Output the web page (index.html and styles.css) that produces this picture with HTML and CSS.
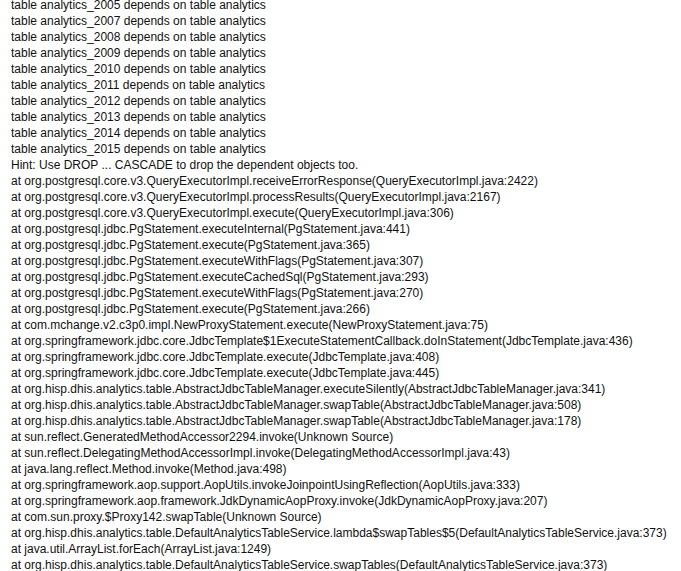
FILE: index.html
```html
<!DOCTYPE html>
<html lang="en">
<head>
    <meta charset="UTF-8">
    <meta name="viewport" content="width=device-width, initial-scale=1.0">
    <title>Error</title>
    <link rel="stylesheet" href="styles.css">
</head>
<body>
    <div class="error-log">
        <div class="log-line">table analytics_2005 depends on table analytics</div>
        <div class="log-line">table analytics_2007 depends on table analytics</div>
        <div class="log-line">table analytics_2008 depends on table analytics</div>
        <div class="log-line">table analytics_2009 depends on table analytics</div>
        <div class="log-line">table analytics_2010 depends on table analytics</div>
        <div class="log-line">table analytics_2011 depends on table analytics</div>
        <div class="log-line">table analytics_2012 depends on table analytics</div>
        <div class="log-line">table analytics_2013 depends on table analytics</div>
        <div class="log-line">table analytics_2014 depends on table analytics</div>
        <div class="log-line">table analytics_2015 depends on table analytics</div>
        <div class="log-line">Hint: Use DROP ... CASCADE to drop the dependent objects too.</div>
        <div class="log-line">at org.postgresql.core.v3.QueryExecutorImpl.receiveErrorResponse(QueryExecutorImpl.java:2422)</div>
        <div class="log-line">at org.postgresql.core.v3.QueryExecutorImpl.processResults(QueryExecutorImpl.java:2167)</div>
        <div class="log-line">at org.postgresql.core.v3.QueryExecutorImpl.execute(QueryExecutorImpl.java:306)</div>
        <div class="log-line">at org.postgresql.jdbc.PgStatement.executeInternal(PgStatement.java:441)</div>
        <div class="log-line">at org.postgresql.jdbc.PgStatement.execute(PgStatement.java:365)</div>
        <div class="log-line">at org.postgresql.jdbc.PgStatement.executeWithFlags(PgStatement.java:307)</div>
        <div class="log-line">at org.postgresql.jdbc.PgStatement.executeCachedSql(PgStatement.java:293)</div>
        <div class="log-line">at org.postgresql.jdbc.PgStatement.executeWithFlags(PgStatement.java:270)</div>
        <div class="log-line">at org.postgresql.jdbc.PgStatement.execute(PgStatement.java:266)</div>
        <div class="log-line">at com.mchange.v2.c3p0.impl.NewProxyStatement.execute(NewProxyStatement.java:75)</div>
        <div class="log-line">at org.springframework.jdbc.core.JdbcTemplate$1ExecuteStatementCallback.doInStatement(JdbcTemplate.java:436)</div>
        <div class="log-line">at org.springframework.jdbc.core.JdbcTemplate.execute(JdbcTemplate.java:408)</div>
        <div class="log-line">at org.springframework.jdbc.core.JdbcTemplate.execute(JdbcTemplate.java:445)</div>
        <div class="log-line">at org.hisp.dhis.analytics.table.AbstractJdbcTableManager.executeSilently(AbstractJdbcTableManager.java:341)</div>
        <div class="log-line">at org.hisp.dhis.analytics.table.AbstractJdbcTableManager.swapTable(AbstractJdbcTableManager.java:508)</div>
        <div class="log-line">at org.hisp.dhis.analytics.table.AbstractJdbcTableManager.swapTable(AbstractJdbcTableManager.java:178)</div>
        <div class="log-line">at sun.reflect.GeneratedMethodAccessor2294.invoke(Unknown Source)</div>
        <div class="log-line">at sun.reflect.DelegatingMethodAccessorImpl.invoke(DelegatingMethodAccessorImpl.java:43)</div>
        <div class="log-line">at java.lang.reflect.Method.invoke(Method.java:498)</div>
        <div class="log-line">at org.springframework.aop.support.AopUtils.invokeJoinpointUsingReflection(AopUtils.java:333)</div>
        <div class="log-line">at org.springframework.aop.framework.JdkDynamicAopProxy.invoke(JdkDynamicAopProxy.java:207)</div>
        <div class="log-line">at com.sun.proxy.$Proxy142.swapTable(Unknown Source)</div>
        <div class="log-line">at org.hisp.dhis.analytics.table.DefaultAnalyticsTableService.lambda$swapTables$5(DefaultAnalyticsTableService.java:373)</div>
        <div class="log-line">at java.util.ArrayList.forEach(ArrayList.java:1249)</div>
        <div class="log-line">at org.hisp.dhis.analytics.table.DefaultAnalyticsTableService.swapTables(DefaultAnalyticsTableService.java:373)</div>
    </div>
</body>
</html>
```

FILE: styles.css
```css
* {
    margin: 0;
    padding: 0;
    box-sizing: border-box;
}

body {
    font-family: 'Liberation Sans', Arial, sans-serif;
    background-color: white;
    color: #111;
    overflow: hidden;
}

.error-log {
    margin-top: -3px;
    padding-left: 11px;
}

.log-line {
    font-size: 12px;
    line-height: 16px;
    white-space: nowrap;
}
```
